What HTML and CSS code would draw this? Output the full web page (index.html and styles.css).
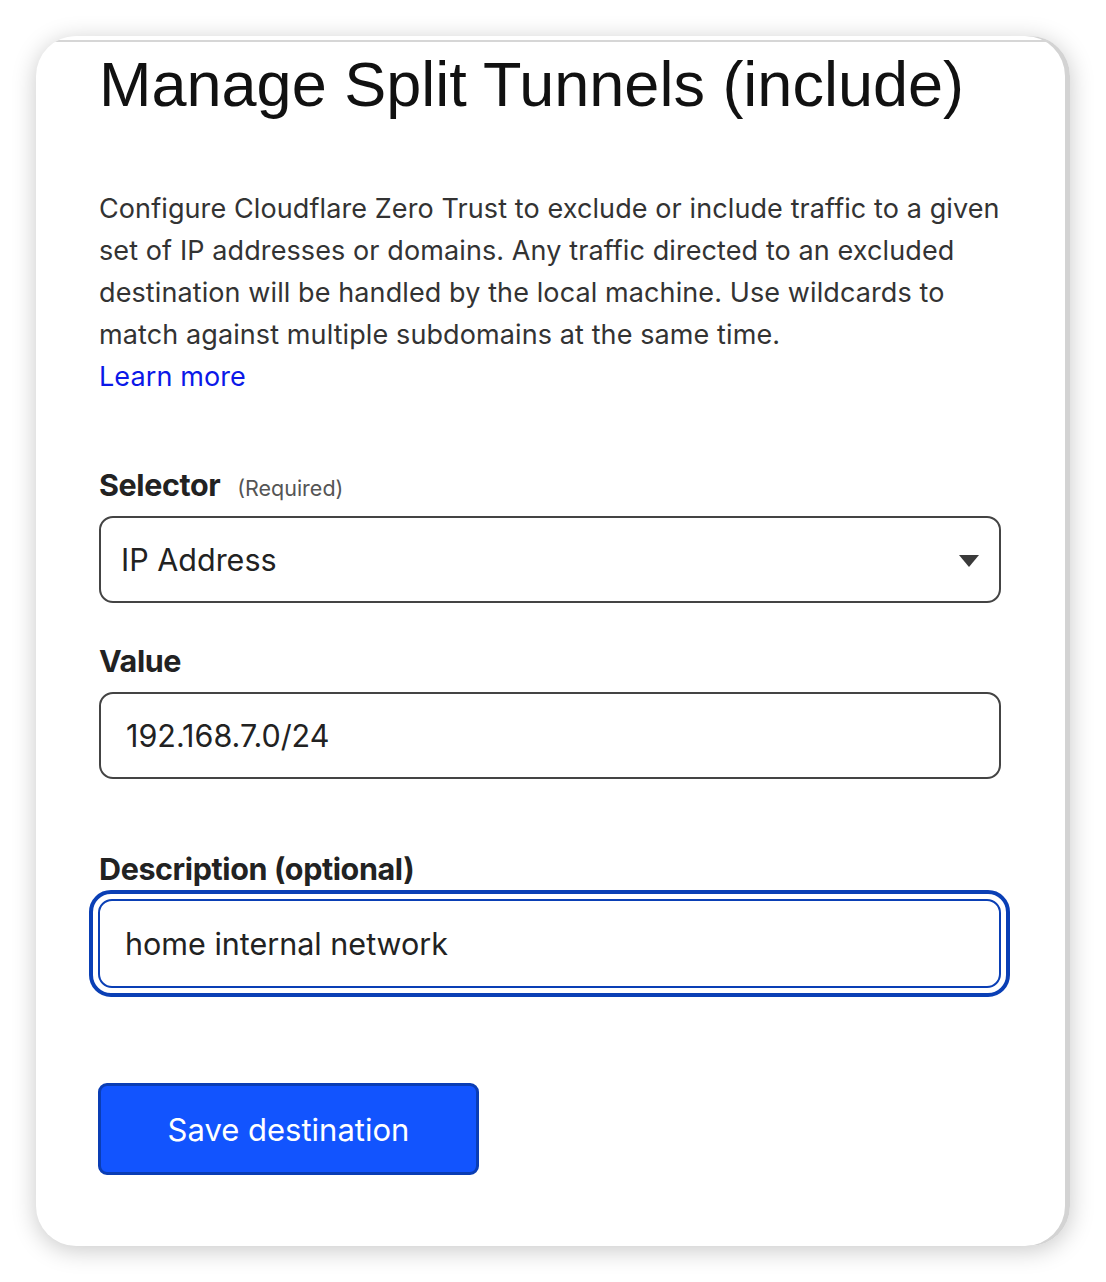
FILE: index.html
```html
<!DOCTYPE html>
<html lang="en">
<head>
<meta charset="utf-8">
<title>Manage Split Tunnels (include)</title>
<link rel="stylesheet" href="styles.css">
</head>
<body>
<div class="card">
  <div class="scroller">
    <h1 class="title">Manage Split Tunnels (include)</h1>
    <p class="intro">Configure Cloudflare Zero Trust to exclude or include traffic to a given set of IP addresses or domains. Any traffic directed to an excluded destination will be handled by the local machine. Use wildcards to match against multiple subdomains at the same time.<br><a class="link" href="#">Learn more</a></p>

    <div class="field field-selector">
      <div class="label">Selector <span class="req">(Required)</span></div>
      <div class="select">
        <span class="select-text">IP Address</span>
        <svg class="caret" width="20" height="12" viewBox="0 0 20 12"><path d="M0 0H20L10 12Z" fill="#3a3a3a"/></svg>
      </div>
    </div>

    <div class="field field-value">
      <div class="label">Value</div>
      <div class="input">192.168.7.0/24</div>
    </div>

    <div class="field field-desc">
      <div class="label">Description (optional)</div>
      <div class="focus-ring">
        <div class="input input-focused">home internal network</div>
      </div>
    </div>

    <button class="btn" type="button">Save destination</button>
  </div>
</div>
</body>
</html>
```

FILE: styles.css
```css
html, body {
  margin: 0;
  padding: 0;
  background: #ffffff;
}
body {
  padding: 36px 36px 36px 36px;
  font-family: Inter, "Noto Sans", sans-serif;
  color: #2b2b2b;
}
.card {
  width: 1034px;
  height: 1210px;
  box-sizing: border-box;
  background: #ffffff;
  border-radius: 40px;
  box-shadow: 0 4px 24px rgba(0,0,0,0.22), inset -5px 0 0 #d3d3d3;
  padding-top: 4px;
  overflow: hidden;
}
.scroller {
  margin: 0 18px 0 10px;
  border-top: 2px solid #d6d6d6;
  padding-left: 53px;
}
.title {
  margin: 0;
  padding-top: 5px;
  font-family: "Liberation Sans", Arial, sans-serif;
  font-weight: 400;
  font-size: 63px;
  line-height: 74px;
  color: #111111;
  letter-spacing: 0;
}
.intro {
  margin: 67px 0 0 0;
  width: 915px;
  font-size: 27px;
  line-height: 42px;
  color: #333333;
  letter-spacing: 0.1px;
}
.link {
  color: #0b18e8;
  text-decoration: none;
}
.field {
  width: 902px;
}
.field-selector { margin-top: 69px; }
.field-value { margin-top: 40px; }
.field-desc { margin-top: 72px; }
.label {
  font-size: 30.5px;
  font-weight: 700;
  color: #222222;
  line-height: 36px;
  letter-spacing: -0.4px;
}
.req {
  font-size: 21.5px;
  font-weight: 400;
  color: #555555;
  margin-left: 10px;
  letter-spacing: 0;
}
.select, .input {
  box-sizing: border-box;
  width: 902px;
  height: 87px;
  border: 2px solid #444444;
  border-radius: 14px;
  display: flex;
  align-items: center;
  font-size: 30.5px;
  color: #222222;
}
.select {
  margin-top: 10px;
  padding: 0 20px 0 20px;
  justify-content: space-between;
}
.input {
  margin-top: 13px;
  padding-left: 25px;
}
.caret { margin-top: 2px; }
.focus-ring {
  box-sizing: border-box;
  width: 921px;
  height: 107px;
  margin: 3px 0 0 -10px;
  padding: 5px;
  border: 4px solid #0a3fb5;
  border-radius: 22px;
}
.focus-ring .input {
  margin-top: 0;
  border-color: #0a3fb5;
  width: 903px;
  height: 89px;
  padding-left: 25px;
}
.btn {
  display: block;
  margin-top: 86px;
  width: 381px;
  height: 92px;
  box-sizing: border-box;
  background: #1254fe;
  border: 3px solid #0a3db4;
  border-radius: 9px;
  color: #ffffff;
  font-family: Inter, "Noto Sans", sans-serif;
  font-size: 31px;
  padding: 0;
  margin-left: -1px;
}
```
